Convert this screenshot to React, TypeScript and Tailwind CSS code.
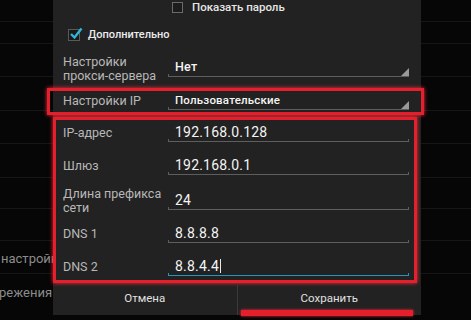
import React from 'react'

const font = { fontFamily: 'Roboto, "Noto Sans", sans-serif' }

function Field({ value, size, drop, active, cursor }: { value: string; size: string; drop?: boolean; active?: boolean; cursor?: boolean }) {
  const line = active ? 'bg-[#2c93b8]' : 'bg-[#5e5e5e]'
  return (
    <div className="relative flex-1 h-[22px] flex items-end pl-[7px] pb-[2px]">
      <span className={`${size} leading-[16px] text-[#f4f4f4] tracking-[0.2px]`}>{value}</span>
      {cursor && <span className="ml-[1px] mb-[1px] w-[1px] h-[14px] bg-[#e8e8e8]" />}
      <div className={`absolute left-0 right-0 bottom-0 h-[1px] ${line}`} />
      <div className={`absolute left-0 bottom-0 w-[1px] h-[3px] ${line}`} />
      {drop ? (
        <svg className="absolute right-0 bottom-[1px]" width="8" height="8" viewBox="0 0 8 8">
          <polygon points="8,0 8,8 0,8" fill="#9a9a9a" />
        </svg>
      ) : (
        <div className={`absolute right-0 bottom-0 w-[1px] h-[3px] ${line}`} />
      )}
    </div>
  )
}

function Row({ h, label, value, size = 'text-[14px]', drop, active, cursor, two }: { h: string; label: React.ReactNode; value: string; size?: string; drop?: boolean; active?: boolean; cursor?: boolean; two?: string }) {
  return (
    <div className={`flex items-end ${h}`}>
      <div className={`w-[105px] shrink-0 text-[12.5px] text-[#b8b8b8] ${two ? `leading-[14px] ${two}` : 'leading-[16px] pb-[1px]'}`}>
        {label}
      </div>
      <Field value={value} size={size} drop={drop} active={active} cursor={cursor} />
    </div>
  )
}

export default function App() {
  const bgLines = [21, 43, 76, 110, 143, 177, 208, 240, 273]
  return (
    <div className="relative w-[471px] h-[320px] overflow-hidden bg-[#060606]" style={font}>
      {/* background list */}
      {bgLines.map(y => (
        <div key={y} className="absolute left-0 right-0 h-[1px] bg-[#161616]" style={{ top: y }} />
      ))}
      <div className="absolute left-[1px] top-[249px] text-[13px] text-[#8c8c8c]">настройки</div>
      <div className="absolute left-[-1px] top-[283px] text-[13px] text-[#8c8c8c]">режения</div>

      {/* dialog */}
      <div className="absolute left-[53px] top-0 w-[368px] h-[315px] bg-[#222222] flex flex-col pl-[10px] pr-[12px]">
        <div className="h-[51px] relative">
          <div className="absolute left-[109px] top-[-1px] flex items-center gap-[9px]">
            <div className="w-[11px] h-[11px] border border-[#6a6a6a] bg-[#1c1c1c]" />
            <span className="text-[11.5px] font-medium text-[#e6e6e6]">Показать пароль</span>
          </div>
          <div className="absolute left-[5px] top-[27px] flex items-center gap-[8px]">
            <div className="w-[12px] h-[12px] border border-[#5a5a5a] bg-[#1a1a1a] relative">
              <svg className="absolute left-[0px] top-[-3px]" width="14" height="13" viewBox="0 0 14 13">
                <path d="M2 7 L5.5 10.5 L12.5 1.5" stroke="#2fb5d8" strokeWidth="2.4" fill="none" />
              </svg>
            </div>
            <span className="text-[11px] font-medium text-[#ececec]">Дополнительно</span>
          </div>
        </div>
        <Row h="h-[26px]" two="mb-[-6px]" label={<>Настройки<br />прокси-сервера</>} value="Нет" size="text-[12.5px] font-medium" drop />
        <Row h="h-[33px]" label="Настройки IP" value="Пользовательские" size="text-[11.5px] font-medium" drop />
        <Row h="h-[32px]" label="IP-адрес" value="192.168.0.128" />
        <Row h="h-[33px]" label="Шлюз" value="192.168.0.1" />
        <Row h="h-[35px]" two="mb-[-5px]" label={<>Длина префикса<br />сети</>} value="24" />
        <Row h="h-[33px]" label="DNS 1" value="8.8.8.8" />
        <Row h="h-[33px]" label="DNS 2" value="8.8.4.4" active cursor />
        <div className="flex flex-1 -ml-[10px] -mr-[12px] mt-[9px]">
          <div className="flex-1 flex items-center justify-center text-[11.5px] text-[#e0e0e0] pb-[3px]">Отмена</div>
          <div className="w-[1px] bg-[#3a3a3a]" />
          <div className="flex-1 flex items-center justify-center text-[11.5px] text-[#e0e0e0] pb-[3px]">Сохранить</div>
        </div>
      </div>

      {/* red annotations */}
      <div className="absolute left-[47px] top-[88px] w-[377px] h-[27px] border-[3px] border-[#e3202c] shadow-[0_0_4px_#ff2a3a]" />
      <div className="absolute left-[53px] top-[117px] w-[364px] h-[166px] border-[3px] border-[#e3202c] shadow-[0_0_4px_#ff2a3a]" />
      <div className="absolute left-[241px] top-[310px] w-[172px] h-[6px] bg-[#e3202c] shadow-[0_0_3px_#ff2a3a]" />
    </div>
  )
}
